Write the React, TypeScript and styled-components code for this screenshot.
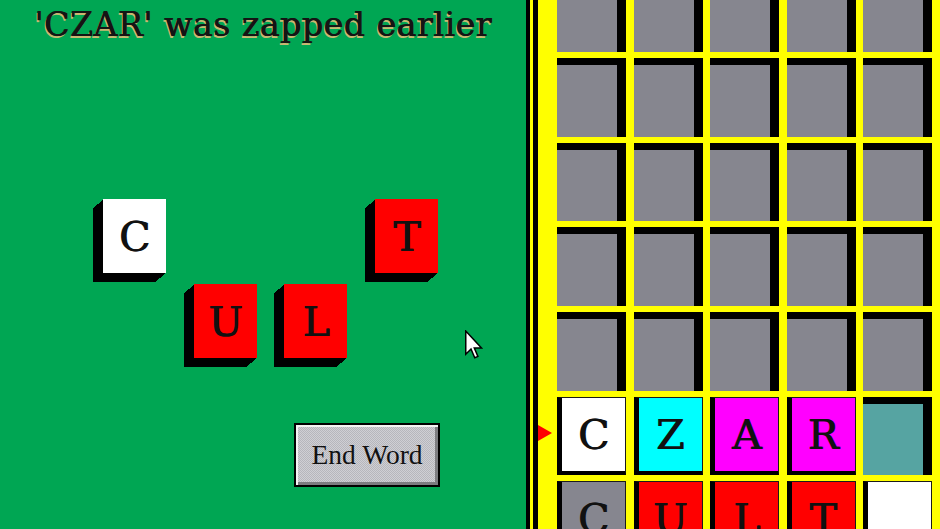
import React from "react";
import styled, { createGlobalStyle } from "styled-components";

const Global = createGlobalStyle`
  html, body { margin: 0; padding: 0; overflow: hidden; background: #000; }
  #root { width: 940px; height: 529px; }
  * { box-sizing: border-box; }
`;

const Screen = styled.div`
  display: flex;
  width: 940px;
  height: 529px;
  overflow: hidden;
`;

const PlayField = styled.div`
  position: relative;
  flex: 0 0 526px;
  height: 100%;
  background: #00a653;
  display: flex;
  flex-direction: column;
`;

const Message = styled.div`
  margin-top: 8px;
  height: 34px;
  font-family: "DejaVu Serif", serif;
  font-size: 33px;
  line-height: 34px;
  letter-spacing: 0.6px;
  color: #141414;
  text-align: center;
  white-space: nowrap;
  text-shadow: 0.9px 0 0 #141414, -1px 2px 0 #c9b872;
`;

const Scramble = styled.div`
  display: grid;
  grid-template-columns: repeat(4, 63px);
  grid-template-rows: repeat(2, 74px);
  column-gap: 27.7px;
  row-gap: 11px;
  margin: 157px 0 0 103px;
`;

const steps = Array.from({ length: 10 }, (_, i) => `${-(i + 1)}px ${Math.round((i + 1) * 0.9)}px 0 #000`).join(", ");

const Block = styled.div<{ $col: number; $row: number; $color: string }>`
  grid-column: ${(p) => p.$col};
  grid-row: ${(p) => p.$row};
  background: ${(p) => p.$color};
  box-shadow: ${steps};
  display: flex;
  align-items: center;
  justify-content: center;
`;

const Letter = styled.span`
  font-family: "DejaVu Serif", serif;
  font-size: 41px;
  line-height: 1;
  color: #111;
  text-shadow: 1px 0 0 #111;
  margin-top: 2px;
`;

const EndWord = styled.button`
  align-self: flex-start;
  margin: 65px 0 0 294px;
  width: 146px;
  height: 64px;
  padding: 0;
  border: 2px solid #000;
  background-color: #c4c4ca;
  background-image: repeating-conic-gradient(#b6b6bc 0 25%, #cfcfd4 0 50%);
  background-size: 2px 2px;
  box-shadow: inset 2px 2px 0 #f4f4f4, inset -3px -3px 0 #7c7c80;
  font-family: "Liberation Serif", "Times New Roman", serif;
  font-size: 27.5px;
  color: #111;
  cursor: default;
`;

const Pointer = styled.svg`
  position: absolute;
  left: 465px;
  top: 330px;
  width: 18px;
  height: 29px;
`;

const Frame = styled.div`
  flex: 1;
  height: 100%;
  background: #ffff00;
  border-left: 4px solid #000;
  padding-left: 3px;
`;

const Rail = styled.div`
  height: 100%;
  border-left: 5px solid #000;
  overflow: hidden;
  background: #ffff00;
`;

const Board = styled.div`
  display: flex;
  flex-direction: column;
  gap: 6px;
  margin-top: -26.4px;
  padding-right: 8px;
`;

const Row = styled.div`
  display: flex;
  height: 78.6px;
  flex: 0 0 auto;
`;

const MarkerSlot = styled.div`
  flex: 0 0 19px;
  display: flex;
  align-items: center;
`;

const Marker = styled.div`
  width: 0;
  height: 0;
  margin-top: -6px;
  border-left: 14px solid #f00;
  border-top: 8px solid transparent;
  border-bottom: 8px solid transparent;
`;

const Cells = styled.div`
  display: flex;
  gap: 7.5px;
`;

const Hole = styled.div<{ $color: string }>`
  width: 69px;
  height: 100%;
  background: ${(p) => p.$color};
  border-top: 7px solid #000;
  border-right: 9px solid #000;
`;

const Tile = styled.div<{ $color: string }>`
  width: 69px;
  height: 100%;
  background: ${(p) => p.$color};
  border-left: 5px solid #000;
  border-bottom: 4px solid #000;
  border-top: 1px solid #1a1a1a;
  border-right: 1px solid #1a1a1a;
  display: flex;
  align-items: center;
  justify-content: center;
`;

type Cell = { kind: "hole" | "tile"; color: string; letter?: string };

const GRAY = "#86868f";
const hole: Cell = { kind: "hole", color: GRAY };

const rows: { marker?: boolean; cells: Cell[] }[] = [
  { cells: [hole, hole, hole, hole, hole] },
  { cells: [hole, hole, hole, hole, hole] },
  { cells: [hole, hole, hole, hole, hole] },
  { cells: [hole, hole, hole, hole, hole] },
  { cells: [hole, hole, hole, hole, hole] },
  {
    marker: true,
    cells: [
      { kind: "tile", color: "#ffffff", letter: "C" },
      { kind: "tile", color: "#00ffff", letter: "Z" },
      { kind: "tile", color: "#ff00ff", letter: "A" },
      { kind: "tile", color: "#ff00ff", letter: "R" },
      { kind: "hole", color: "#56a4a2" },
    ],
  },
  {
    cells: [
      { kind: "tile", color: GRAY, letter: "C" },
      { kind: "tile", color: "#ff0000", letter: "U" },
      { kind: "tile", color: "#ff0000", letter: "L" },
      { kind: "tile", color: "#ff0000", letter: "T" },
      { kind: "tile", color: "#ffffff" },
    ],
  },
];

const blocks = [
  { letter: "C", col: 1, row: 1, color: "#ffffff" },
  { letter: "U", col: 2, row: 2, color: "#ff0000" },
  { letter: "L", col: 3, row: 2, color: "#ff0000" },
  { letter: "T", col: 4, row: 1, color: "#ff0000" },
];

export default function App() {
  return (
    <>
      <Global />
      <Screen>
        <PlayField>
          <Message>'CZAR' was zapped earlier</Message>
          <Scramble>
            {blocks.map((b) => (
              <Block key={b.letter} $col={b.col} $row={b.row} $color={b.color}>
                <Letter>{b.letter}</Letter>
              </Block>
            ))}
          </Scramble>
          <EndWord>End Word</EndWord>
          <Pointer viewBox="0 0 12 19">
            <path
              d="M0.5 0.5 L0.5 16 L4 12.5 L6.5 18.3 L8.6 17.4 L6.2 11.8 L11 11.8 Z"
              fill="#fff"
              stroke="#000"
              strokeWidth="1"
              strokeLinejoin="miter"
            />
          </Pointer>
        </PlayField>
        <Frame>
          <Rail>
            <Board>
              {rows.map((r, i) => (
                <Row key={i}>
                  <MarkerSlot>{r.marker && <Marker />}</MarkerSlot>
                  <Cells>
                    {r.cells.map((c, j) =>
                      c.kind === "hole" ? (
                        <Hole key={j} $color={c.color} />
                      ) : (
                        <Tile key={j} $color={c.color}>
                          {c.letter && <Letter>{c.letter}</Letter>}
                        </Tile>
                      )
                    )}
                  </Cells>
                </Row>
              ))}
            </Board>
          </Rail>
        </Frame>
      </Screen>
    </>
  );
}
